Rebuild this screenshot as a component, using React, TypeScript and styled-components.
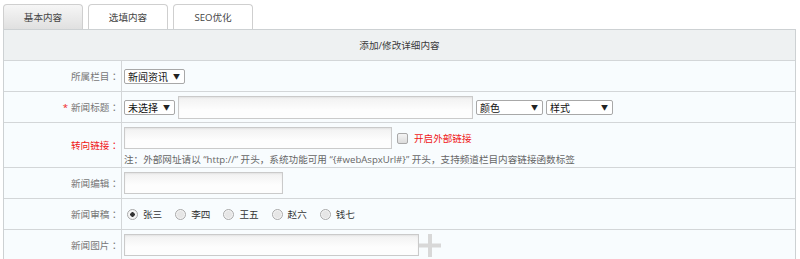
import styled, { createGlobalStyle } from "styled-components";

const GlobalStyle = createGlobalStyle`
  html, body {
    margin: 0;
    padding: 0;
    background: #fff;
  }
  body {
    font-family: "Open Sans", "Noto Sans CJK SC", sans-serif;
    font-size: 9.6px;
    color: #333;
  }
`;

const Page = styled.div`
  padding: 4px 4px 0 3px;
`;

const TabBar = styled.div`
  display: flex;
  gap: 5px;
  height: 25px;
`;

const Tab = styled.div<{ active?: boolean }>`
  width: 80px;
  height: 25px;
  box-sizing: border-box;
  display: flex;
  align-items: center;
  justify-content: center;
  border: 1px solid #cfcfcf;
  border-bottom: none;
  border-radius: 4px 4px 0 0;
  background: ${({ active }) =>
    active ? "linear-gradient(#f6f6f6, #e0e0e0)" : "#fff"};
  color: #444;
`;

const Table = styled.div`
  border: 1px solid #cdd1d3;
  border-bottom: none;
  background: #f8fcfe;
`;

const Header = styled.div`
  height: 30px;
  display: flex;
  align-items: center;
  justify-content: center;
  background: #eef1f2;
  border-bottom: 1px solid #d3d6d8;
  color: #3a3a3a;
`;

const Row = styled.div<{ tall?: boolean }>`
  display: grid;
  grid-template-columns: 118px 1fr;
  height: ${({ tall }) => (tall ? 44 : 30)}px;
  border-bottom: 1px solid #d3d6d8;
`;

const Label = styled.div<{ red?: boolean }>`
  display: flex;
  align-items: center;
  justify-content: flex-end;
  padding-right: 2px;
  border-right: 1px solid #d3d6d8;
  color: ${({ red }) => (red ? "#f01818" : "#777")};
  &::after {
    content: "：";
    font-family: "Noto Sans CJK TC", sans-serif;
  }
`;

const Star = styled.span`
  color: #f01818;
  margin-right: 3px;
`;

const Field = styled.div`
  display: flex;
  align-items: center;
  padding-left: 2px;
`;

const FieldStack = styled.div`
  display: flex;
  flex-direction: column;
  padding: 4px 0 0 2px;
  gap: 3px;
`;

const Line = styled.div`
  display: flex;
  align-items: center;
`;

const SelectBox = styled.div<{ w: number }>`
  width: ${({ w }) => w}px;
  height: 15px;
  flex-shrink: 0;
  box-sizing: border-box;
  display: flex;
  align-items: center;
  justify-content: space-between;
  padding: 0 4px 0 3px;
  border: 1px solid #a8a8a8;
  border-radius: 2px;
  background: #fff;
  color: #111;
  font-size: 10px;
  white-space: nowrap;
  margin-right: 3px;
  &::after {
    content: "▼";
    font-size: 7px;
    color: #222;
  }
`;

const Input = styled.div<{ w: number; h?: number }>`
  width: ${({ w }) => w}px;
  height: ${({ h }) => h ?? 22}px;
  flex-shrink: 0;
  box-sizing: border-box;
  border: 1px solid #cacaca;
  background: linear-gradient(#f1f1f1, #fdfdfd 60%);
  box-shadow: inset 0 1px 2px rgba(0, 0, 0, 0.06);
`;

const Spacer = styled.span<{ w: number }>`
  width: ${({ w }) => w}px;
`;

const Check = styled.span`
  width: 9px;
  height: 9px;
  margin: 0 6px 0 5px;
  border: 1px solid #a9a9a9;
  border-radius: 2px;
  background: linear-gradient(#f4f4f4, #dcdcdc);
`;

const RedText = styled.span`
  color: #f01818;
`;

const Note = styled.div`
  color: #666;
  white-space: nowrap;
`;

const RadioGroup = styled.div`
  display: flex;
  align-items: center;
  padding-left: 3px;
`;

const RadioItem = styled.label`
  display: flex;
  align-items: center;
  margin-right: 13px;
  color: #333;
`;

const RadioDot = styled.span<{ checked?: boolean }>`
  width: 9px;
  height: 9px;
  border-radius: 50%;
  border: 1px solid #a9a9a9;
  background: ${({ checked }) =>
    checked
      ? "radial-gradient(circle, #333 0 2px, #f4f4f4 2.5px)"
      : "radial-gradient(circle, #e6e6e6 0 3px, #f4f4f4 4px)"};
  margin-right: 5px;
`;

const PlusIcon = () => (
  <svg width="22" height="23" viewBox="0 0 22 23">
    <rect x="9" y="0" width="4" height="23" fill="#d8d8d8" />
    <rect x="0" y="9.5" width="22" height="4" fill="#d8d8d8" />
  </svg>
);

const reviewers = ["张三", "李四", "王五", "赵六", "钱七"];

export default function App() {
  return (
    <Page>
      <GlobalStyle />
      <TabBar>
        <Tab active>基本内容</Tab>
        <Tab>选填内容</Tab>
        <Tab>SEO优化</Tab>
      </TabBar>
      <Table>
        <Header>添加/修改详细内容</Header>
        <Row>
          <Label>所属栏目</Label>
          <Field>
            <SelectBox w={61}>新闻资讯</SelectBox>
          </Field>
        </Row>
        <Row>
          <Label>
            <Star>*</Star>新闻标题
          </Label>
          <Field>
            <SelectBox w={51}>未选择</SelectBox>
            <Input w={295} h={23} />
            <Spacer w={3} />
            <SelectBox w={67}>颜色</SelectBox>
            <SelectBox w={67}>样式</SelectBox>
          </Field>
        </Row>
        <Row tall>
          <Label red>转向链接</Label>
          <FieldStack>
            <Line>
              <Input w={268} />
              <Check />
              <RedText>开启外部链接</RedText>
            </Line>
            <Note>
              注：外部网址请以 “http://” 开头，系统功能可用 “{"{#webAspxUrl#}"}” 开头，支持频道栏目内容链接函数标签
            </Note>
          </FieldStack>
        </Row>
        <Row>
          <Label>新闻编辑</Label>
          <Field>
            <Input w={159} />
          </Field>
        </Row>
        <Row>
          <Label>新闻审稿</Label>
          <Field>
            <RadioGroup>
              {reviewers.map((name, i) => (
                <RadioItem key={name}>
                  <RadioDot checked={i === 0} />
                  {name}
                </RadioItem>
              ))}
            </RadioGroup>
          </Field>
        </Row>
        <Row>
          <Label>新闻图片</Label>
          <Field>
            <Input w={295} />
            <PlusIcon />
          </Field>
        </Row>
      </Table>
    </Page>
  );
}
